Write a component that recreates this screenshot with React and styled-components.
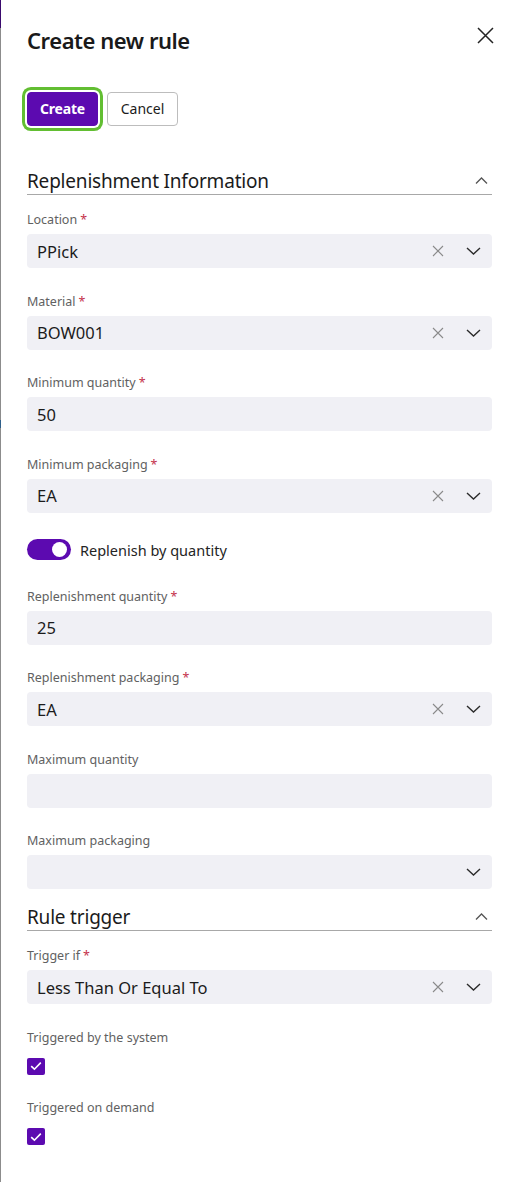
import React from "react";
import styled, { createGlobalStyle } from "styled-components";

const Global = createGlobalStyle`
  html, body { margin: 0; padding: 0; background: #fff; }
  body { font-family: "Noto Sans", "Open Sans", sans-serif; color: #1b1b1b; }
  * { box-sizing: border-box; }
`;

const Panel = styled.div`
  position: relative;
  width: 516px;
  min-height: 1182px;
  background: #fff;
  border-left: 1px solid #8c8c8c;
  padding: 0 24px 0 26px;
  display: flex;
  flex-direction: column;
`;

const EdgeMark = styled.div`
  position: absolute;
  left: -1px;
  top: ${(p) => p.$top}px;
  width: 1px;
  height: ${(p) => p.$h}px;
  background: ${(p) => p.$c};
`;

const Header = styled.div`
  display: flex;
  align-items: center;
  justify-content: space-between;
  height: 28px;
  margin-top: 26px;
`;

const Title = styled.h1`
  margin: 0;
  font-size: 22px;
  font-weight: 600;
  line-height: 28px;
  letter-spacing: -0.45px;
  color: #1a1a1a;
`;

const IconButton = styled.button`
  border: 0;
  background: transparent;
  padding: 0;
  width: 20px;
  height: 20px;
  display: flex;
  align-items: center;
  justify-content: center;
  margin-right: -3px;
  margin-top: -10px;
  color: #242424;
`;

const Actions = styled.div`
  display: flex;
  gap: 9px;
  margin-top: 38px;
`;

const Button = styled.button`
  height: 34px;
  min-width: 71px;
  padding: 0 10px;
  border-radius: 4px;
  font-family: inherit;
  font-size: 14px;
  line-height: 1;
  display: flex;
  align-items: center;
  justify-content: center;
  cursor: pointer;
  ${(p) =>
    p.$primary
      ? `
    background: #5c0ab0;
    color: #fff;
    font-weight: 700;
    letter-spacing: -0.2px;
    border: 1px solid #5c0ab0;
    box-shadow: 0 0 0 2px #fff, 0 0 0 5px #62be32;
  `
      : `
    background: #fff;
    color: #1b1b1b;
    font-weight: 400;
    border: 1px solid #bdbdbd;
  `}
`;

const SectionHeader = styled.div`
  display: flex;
  align-items: center;
  justify-content: space-between;
  height: 27px;
  margin-top: ${(p) => p.$mt}px;
  border-bottom: 1px solid #a8a8a8;
  padding-bottom: 1px;
`;

const SectionTitle = styled.h2`
  margin: 0;
  font-size: 19px;
  font-weight: 400;
  line-height: 26px;
  letter-spacing: -0.2px;
  color: #1b1b1b;
`;

const Chevron = styled.span`
  display: flex;
  margin-right: 4px;
  color: #555;
`;

const Fields = styled.div`
  display: flex;
  flex-direction: column;
  gap: 23.5px;
  margin-top: 15px;
`;

const Field = styled.div`
  display: flex;
  flex-direction: column;
  gap: ${(p) => (p.$check ? 11 : 5)}px;
`;

const Label = styled.label`
  font-size: 12.5px;
  line-height: 19px;
  color: #616161;
`;

const Req = styled.span`
  color: #c4314b;
  margin-left: 3px;
`;

const Input = styled.div`
  height: 34px;
  border-radius: 4px;
  background: #f0f0f5;
  display: flex;
  align-items: center;
  padding: 0 11px 0 10px;
  font-size: 16.5px;
  color: #1b1b1b;
`;

const Value = styled.span`
  flex: 1;
`;

const InputIcons = styled.span`
  display: flex;
  align-items: center;
  gap: 22px;
`;

const ToggleRow = styled.div`
  display: flex;
  align-items: center;
  gap: 9px;
  margin: 3px 0;
  font-size: 14.5px;
  color: #242424;
`;

const Track = styled.span`
  width: 44px;
  height: 21px;
  border-radius: 11px;
  background: #5c0ab0;
  display: flex;
  align-items: center;
  justify-content: flex-end;
  padding-right: 4px;
`;

const Knob = styled.span`
  width: 15px;
  height: 15px;
  border-radius: 50%;
  background: #fff;
`;

const Checkbox = styled.span`
  width: 18px;
  height: 17px;
  border-radius: 2px;
  background: #5c0ab0;
  display: flex;
  align-items: center;
  justify-content: center;
`;

const ClearIcon = () => (
  <svg width="12" height="12" viewBox="0 0 12 12">
    <path d="M1 1 L11 11 M11 1 L1 11" stroke="#8a8a8a" strokeWidth="1.1" fill="none" />
  </svg>
);

const DownIcon = () => (
  <svg width="15" height="8" viewBox="0 0 15 8">
    <path d="M1 1 L7.5 7 L14 1" stroke="#2b2b2b" strokeWidth="1.4" fill="none" />
  </svg>
);

const UpIcon = () => (
  <svg width="13" height="7" viewBox="0 0 13 7">
    <path d="M1 6.5 L6.5 1 L12 6.5" stroke="#555" strokeWidth="1.3" fill="none" />
  </svg>
);

const CloseIcon = () => (
  <svg width="17" height="17" viewBox="0 0 17 17">
    <path d="M1 1 L16 16 M16 1 L1 16" stroke="#242424" strokeWidth="1.5" fill="none" />
  </svg>
);

const CheckIcon = () => (
  <svg width="12" height="10" viewBox="0 0 12 10">
    <path d="M1.2 5.2 L4.4 8.2 L10.8 1.6" stroke="#fff" strokeWidth="1.6" fill="none" />
  </svg>
);

const TextField = ({ label, required, value, clear, dropdown }) => (
  <Field>
    <Label>
      {label}
      {required && <Req>*</Req>}
    </Label>
    <Input>
      <Value>{value}</Value>
      {(clear || dropdown) && (
        <InputIcons>
          {clear && <ClearIcon />}
          {dropdown && <DownIcon />}
        </InputIcons>
      )}
    </Input>
  </Field>
);

const CheckField = ({ label }) => (
  <Field $check>
    <Label>{label}</Label>
    <Checkbox>
      <CheckIcon />
    </Checkbox>
  </Field>
);

export default function App() {
  return (
    <>
      <Global />
      <Panel>
        <EdgeMark $top={0} $h={28} $c="#3a0a6e" />
        <EdgeMark $top={420} $h={8} $c="#2f5f8a" />
        <Header>
          <Title>Create new rule</Title>
          <IconButton aria-label="Close">
            <CloseIcon />
          </IconButton>
        </Header>
        <Actions>
          <Button $primary>Create</Button>
          <Button>Cancel</Button>
        </Actions>

        <SectionHeader $mt={42}>
          <SectionTitle>Replenishment Information</SectionTitle>
          <Chevron>
            <UpIcon />
          </Chevron>
        </SectionHeader>
        <Fields>
          <TextField label="Location" required value="PPick" clear dropdown />
          <TextField label="Material" required value="BOW001" clear dropdown />
          <TextField label="Minimum quantity" required value="50" />
          <TextField label="Minimum packaging" required value="EA" clear dropdown />
          <ToggleRow>
            <Track>
              <Knob />
            </Track>
            Replenish by quantity
          </ToggleRow>
          <TextField label="Replenishment quantity" required value="25" />
          <TextField label="Replenishment packaging" required value="EA" clear dropdown />
          <TextField label="Maximum quantity" value="" />
          <TextField label="Maximum packaging" value="" dropdown />
        </Fields>

        <SectionHeader $mt={15}>
          <SectionTitle>Rule trigger</SectionTitle>
          <Chevron>
            <UpIcon />
          </Chevron>
        </SectionHeader>
        <Fields>
          <TextField label="Trigger if" required value="Less Than Or Equal To" clear dropdown />
          <CheckField label="Triggered by the system" />
          <CheckField label="Triggered on demand" />
        </Fields>
      </Panel>
    </>
  );
}
